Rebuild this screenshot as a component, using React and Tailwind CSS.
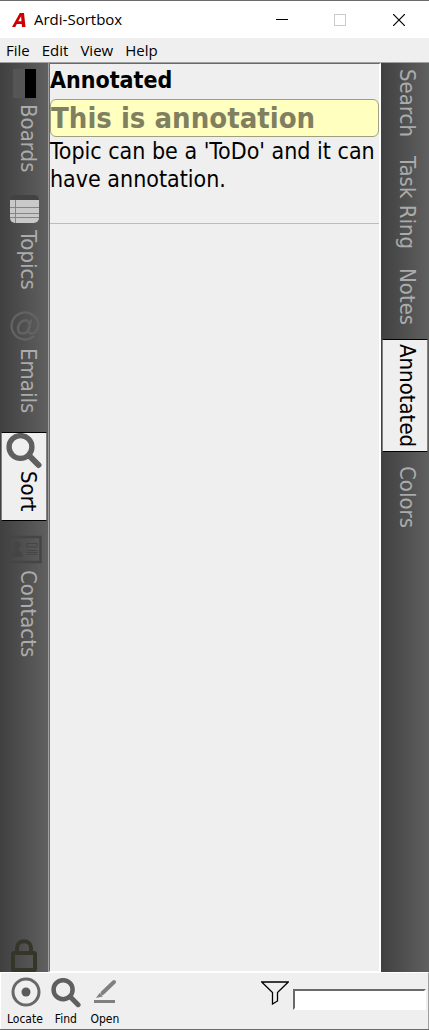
const tahoma = "font-['DejaVu_Sans_Condensed','Noto_Sans',sans-serif]";
const segoe = "font-['Open_Sans','Noto_Sans',sans-serif]";

function MagnifierIcon({ className }) {
  return (
    <svg viewBox="0 0 36 36" className={className} fill="none" stroke="#5f5f5f" aria-hidden="true">
      <circle cx="14.5" cy="14" r="11.4" strokeWidth="5.4" />
      <path d="M23 22.500L32.500 32" strokeWidth="6" strokeLinecap="round" />
    </svg>
  );
}

function BoardsIcon() {
  return (
    <svg viewBox="0 0 36 36" className="size-9" aria-hidden="true">
      <rect x="7" y="3" width="12" height="29" fill="#555" />
      <rect x="19" y="3" width="11" height="29" fill="#000" />
    </svg>
  );
}

function TopicsIcon() {
  return (
    <svg viewBox="0 0 36 36" className="size-9" aria-hidden="true">
      <rect x="4" y="3" width="29" height="28" rx="5" fill="#424242" />
      <path d="M4 8H33V26a5 5 0 0 1-5 5H9a5 5 0 0 1-5-5Z" fill="#c9c9c9" />
      <path d="M4 15.500H33M4 21.500H33M4 25.500H33M9.500 8V31" stroke="#858585" strokeWidth="1" />
    </svg>
  );
}

function EmailsIcon() {
  return (
    <svg viewBox="0 0 36 36" className="size-9" fill="none" stroke="#636363" strokeLinecap="round" aria-hidden="true">
      <path d="M27.500 26.500A13.500 13.500 0 1 1 32.500 14.500C32 20.500 28.500 23.500 25.500 23.500C22.500 23.500 22.300 21.500 22.800 19.500L25 10.500" strokeWidth="2.300" />
      <path d="M23.500 14.500C23 11 20.500 10 18.300 10.500C14.500 11.300 12 15 12 18.500C12 21.500 13.800 23.500 16.500 23.500C20 23.500 22.500 20.500 23.300 17" strokeWidth="2.500" />
    </svg>
  );
}

function ContactsIcon() {
  return (
    <svg viewBox="0 0 36 36" className="size-9" fill="none" stroke="#454545" aria-hidden="true">
      <rect x="2.500" y="5" width="32" height="25" strokeWidth="2.500" />
      <circle cx="11" cy="13" r="3.500" fill="#454545" stroke="none" />
      <path d="M5 25V22Q6 20 9 19L9.500 15H12.500L13 19Q16.500 20 17 25Z" fill="#454545" stroke="none" />
      <rect x="21" y="11.500" width="10" height="3.500" strokeWidth="1" />
      <path d="M20.500 18.500H31.500M20.500 20.500H31.500M20.500 22.500H31.500" strokeWidth="1" />
    </svg>
  );
}

const leftTabs = [
  { label: "Boards", icon: <BoardsIcon /> },
  { label: "Topics", icon: <TopicsIcon /> },
  { label: "Emails", icon: <EmailsIcon /> },
  { label: "Sort", icon: <MagnifierIcon className="size-9" />, active: true },
  { label: "Contacts", icon: <ContactsIcon /> },
];

const rightTabs = [
  { label: "Search" },
  { label: "Task Ring" },
  { label: "Notes" },
  { label: "Annotated", active: true },
  { label: "Colors" },
];

function SideTab({ label, icon, active }) {
  return (
    <button
      type="button"
      className={
        "flex w-full flex-col items-center gap-0.5 border text-[22px] leading-7 " +
        (icon ? "pb-2 " : "pt-1 ") +
        (icon ? "" : "pb-1 ") +
        (active ? "border-x-[#808080] border-y-black bg-[#efefef] text-black" : "border-transparent text-[#ababab]")
      }
    >
      {icon}
      <span className={"[writing-mode:vertical-rl] " + (icon ? "ml-2" : "ml-1")}>{label}</span>
    </button>
  );
}

function ToolButton({ label, children }) {
  return (
    <button type="button" className="flex flex-col items-center gap-0.5 text-xs text-black">
      {children}
      {label}
    </button>
  );
}

export default function App() {
  return (
    <div className={"flex min-h-screen flex-col border-y border-[#6b6b6b] bg-[#efefef] text-black " + tahoma}>
      <header className={"flex h-[37px] items-center bg-white pl-3 " + segoe}>
        <svg viewBox="0 0 14 14" className="h-3.5 w-3.5 shrink-0" aria-hidden="true">
          <path fillRule="evenodd" d="M0 14L7.800 0H12L13.500 14H10L9.700 11H4.800L3.300 14ZM6.300 8.300H9.500L9.100 3.300Z" fill="#cc0000" />
        </svg>
        <h1 className="ml-2 flex-1 text-[15px]">Ardi-Sortbox</h1>
        <button type="button" aria-label="Minimize" className="flex h-full w-[58px] items-center justify-center">
          <svg viewBox="0 0 12 12" className="size-3" aria-hidden="true"><path d="M0 5.500H12" stroke="#000" /></svg>
        </button>
        <button type="button" aria-label="Maximize" disabled className="flex h-full w-[58px] items-center justify-center">
          <svg viewBox="0 0 12 12" className="size-3" aria-hidden="true"><rect x=".5" y=".5" width="11" height="11" fill="none" stroke="#ccc" /></svg>
        </button>
        <button type="button" aria-label="Close" className="flex h-full w-[60px] items-center justify-center">
          <svg viewBox="0 0 12 12" className="size-3" aria-hidden="true"><path d="M0 0L12 12M12 0L0 12" stroke="#000" strokeWidth="1.200" /></svg>
        </button>
      </header>

      <nav className={"flex h-6 items-center gap-3 px-1.5 text-[15px] " + segoe}>
        <button type="button">File</button>
        <button type="button">Edit</button>
        <button type="button">View</button>
        <button type="button">Help</button>
      </nav>

      <div className="flex flex-1 border-t border-[#a0a0a0]">
        <aside className="flex w-[49px] shrink-0 flex-col justify-between border-r border-[#a0a0a0] bg-linear-to-r from-[#404040] to-[#606060] px-px pt-0.5">
          <div className="flex flex-col gap-2.5">
            {leftTabs.map((tab) => <SideTab key={tab.label} {...tab} />)}
          </div>
          <button type="button" aria-label="Lock" className="ml-2.5 w-[26px]">
            <svg viewBox="0 0 26 33" className="w-full" fill="none" stroke="#35352a" aria-hidden="true">
              <path d="M6 14V9C6 0 20 0 20 9V14" strokeWidth="4" />
              <rect x="2" y="14" width="22" height="17" rx="1" strokeWidth="4" />
            </svg>
          </button>
        </aside>

        <main className="min-w-0 flex-1 border-t border-r-2 border-b border-l border-t-[#696969] border-r-white border-b-white border-l-[#696969]">
          <h2 className="h-[35px] text-[23px] leading-8 font-bold">Annotated</h2>
          <p className="rounded-md border border-[#a0a080] bg-[#ffffc0] text-[29px] leading-9 font-bold text-[#808060]">This is annotation</p>
          <p className="h-[87px] border-b border-[#b8bcc8] text-[23px] leading-7">
            Topic can be a 'ToDo' and it can have annotation.
          </p>
        </main>

        <aside className="flex w-12 shrink-0 flex-col gap-[9px] bg-linear-to-r from-[#404040] to-[#606060] px-px pt-px">
          {rightTabs.map((tab) => <SideTab key={tab.label} {...tab} />)}
        </aside>
      </div>

      <footer className="flex h-[57px] items-start gap-[7px] border-t border-r border-l border-t-white border-r-[#a0a0a0] border-l-white pt-1 pr-0.5 pl-1.5">
        <ToolButton label="Locate">
          <svg viewBox="0 0 32 32" className="size-8" fill="none" stroke="#686868" aria-hidden="true">
            <circle cx="17" cy="15" r="13" strokeWidth="3" />
            <circle cx="17" cy="15" r="4.500" fill="#5c5c5c" stroke="none" />
          </svg>
        </ToolButton>
        <ToolButton label="Find"><MagnifierIcon className="size-8 p-px" /></ToolButton>
        <ToolButton label="Open">
          <svg viewBox="0 0 32 32" className="size-8" aria-hidden="true">
            <path d="M5 23H26V26H5ZM7 21L10.500 16L14 19.500Z" fill="#808080" />
            <path d="M13.500 16L25 5" stroke="#808080" strokeWidth="4" strokeLinecap="round" />
          </svg>
        </ToolButton>
        <div className="flex flex-1 items-start justify-end gap-1">
          <svg viewBox="0 0 28 24" className="mt-1 h-6 w-7" fill="none" stroke="#000" strokeWidth="1.300" aria-hidden="true">
            <path d="M.7 1H27.300L16.500 11.500V20L11.500 23V11.500Z" />
          </svg>
          <input
            type="text"
            aria-label="Filter"
            className="mt-3 h-[21px] w-[133px] border-2 border-t-[#696969] border-r-white border-b-white border-l-[#696969] bg-white px-1 text-xs outline-none"
          />
        </div>
      </footer>
    </div>
  );
}
